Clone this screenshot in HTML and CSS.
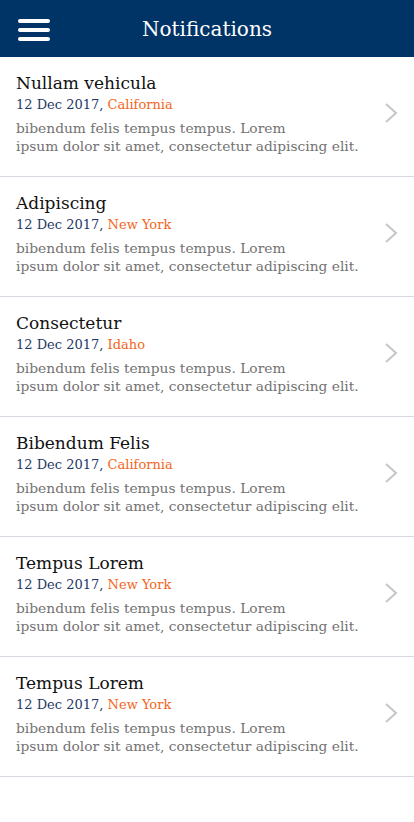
FILE: index.html
```html
<!DOCTYPE html>
<html lang="en">
<head>
<meta charset="utf-8">
<meta name="viewport" content="width=device-width, initial-scale=1">
<title>Notifications</title>
<link rel="stylesheet" href="styles.css">
</head>
<body>
<header class="topbar">
  <button class="menu-btn" aria-label="Menu">
    <span></span><span></span><span></span>
  </button>
  <h1 class="topbar-title">Notifications</h1>
</header>
<ul class="list">
  <li class="item">
    <div class="item-body">
      <div class="item-title">Nullam vehicula</div>
      <div class="item-meta"><span class="date">12 Dec 2017</span>, <span class="place">California</span></div>
      <p class="item-text">bibendum felis tempus tempus. Lorem<br>ipsum dolor sit amet, consectetur adipiscing elit.</p>
    </div>
    <svg class="chev" width="14" height="22" viewBox="0 0 14 22"><path d="M2 2 L12 11 L2 20" fill="none" stroke="#c6c6c6" stroke-width="2"/></svg>
  </li>
  <li class="item">
    <div class="item-body">
      <div class="item-title">Adipiscing</div>
      <div class="item-meta"><span class="date">12 Dec 2017</span>, <span class="place">New York</span></div>
      <p class="item-text">bibendum felis tempus tempus. Lorem<br>ipsum dolor sit amet, consectetur adipiscing elit.</p>
    </div>
    <svg class="chev" width="14" height="22" viewBox="0 0 14 22"><path d="M2 2 L12 11 L2 20" fill="none" stroke="#c6c6c6" stroke-width="2"/></svg>
  </li>
  <li class="item">
    <div class="item-body">
      <div class="item-title">Consectetur</div>
      <div class="item-meta"><span class="date">12 Dec 2017</span>, <span class="place">Idaho</span></div>
      <p class="item-text">bibendum felis tempus tempus. Lorem<br>ipsum dolor sit amet, consectetur adipiscing elit.</p>
    </div>
    <svg class="chev" width="14" height="22" viewBox="0 0 14 22"><path d="M2 2 L12 11 L2 20" fill="none" stroke="#c6c6c6" stroke-width="2"/></svg>
  </li>
  <li class="item">
    <div class="item-body">
      <div class="item-title">Bibendum Felis</div>
      <div class="item-meta"><span class="date">12 Dec 2017</span>, <span class="place">California</span></div>
      <p class="item-text">bibendum felis tempus tempus. Lorem<br>ipsum dolor sit amet, consectetur adipiscing elit.</p>
    </div>
    <svg class="chev" width="14" height="22" viewBox="0 0 14 22"><path d="M2 2 L12 11 L2 20" fill="none" stroke="#c6c6c6" stroke-width="2"/></svg>
  </li>
  <li class="item">
    <div class="item-body">
      <div class="item-title">Tempus Lorem</div>
      <div class="item-meta"><span class="date">12 Dec 2017</span>, <span class="place">New York</span></div>
      <p class="item-text">bibendum felis tempus tempus. Lorem<br>ipsum dolor sit amet, consectetur adipiscing elit.</p>
    </div>
    <svg class="chev" width="14" height="22" viewBox="0 0 14 22"><path d="M2 2 L12 11 L2 20" fill="none" stroke="#c6c6c6" stroke-width="2"/></svg>
  </li>
  <li class="item">
    <div class="item-body">
      <div class="item-title">Tempus Lorem</div>
      <div class="item-meta"><span class="date">12 Dec 2017</span>, <span class="place">New York</span></div>
      <p class="item-text">bibendum felis tempus tempus. Lorem<br>ipsum dolor sit amet, consectetur adipiscing elit.</p>
    </div>
    <svg class="chev" width="14" height="22" viewBox="0 0 14 22"><path d="M2 2 L12 11 L2 20" fill="none" stroke="#c6c6c6" stroke-width="2"/></svg>
  </li>
</ul>
</body>
</html>
```

FILE: styles.css
```css
* { box-sizing: border-box; }
html, body { margin: 0; padding: 0; background: #fff; }
body { font-family: "DejaVu Serif", "Liberation Serif", serif; color: #111; }

.topbar {
  height: 57px;
  background: #003366;
  display: flex;
  align-items: center;
  justify-content: center;
  position: relative;
}
.menu-btn {
  position: absolute;
  left: 18px;
  top: 19px;
  width: 32px;
  height: 22px;
  padding: 0;
  border: 0;
  background: none;
  display: flex;
  flex-direction: column;
  justify-content: space-between;
}
.menu-btn span {
  display: block;
  height: 4px;
  width: 32px;
  border-radius: 2px;
  background: #fff;
}
.topbar-title {
  margin: 0;
  color: #fff;
  font-weight: normal;
  font-size: 20px;
  line-height: 24px;
}

.list { list-style: none; margin: 0; padding: 0; }
.item {
  display: flex;
  align-items: center;
  padding: 14px 16px 21px 16px;
  border-bottom: 1px solid #d5d9e0;
}
.item-body { flex: 1; min-width: 0; }
.item-title { font-size: 17px; line-height: 24px; color: #111; }
.item-meta { font-size: 13px; line-height: 20px; color: #1f3a68; }
.item-meta .place { color: #f26522; }
.item-text { margin: 4px 0 0; font-size: 13.8px; line-height: 18px; color: #727272; white-space: nowrap; }
.chev { flex: none; margin-left: 4px; }
```
